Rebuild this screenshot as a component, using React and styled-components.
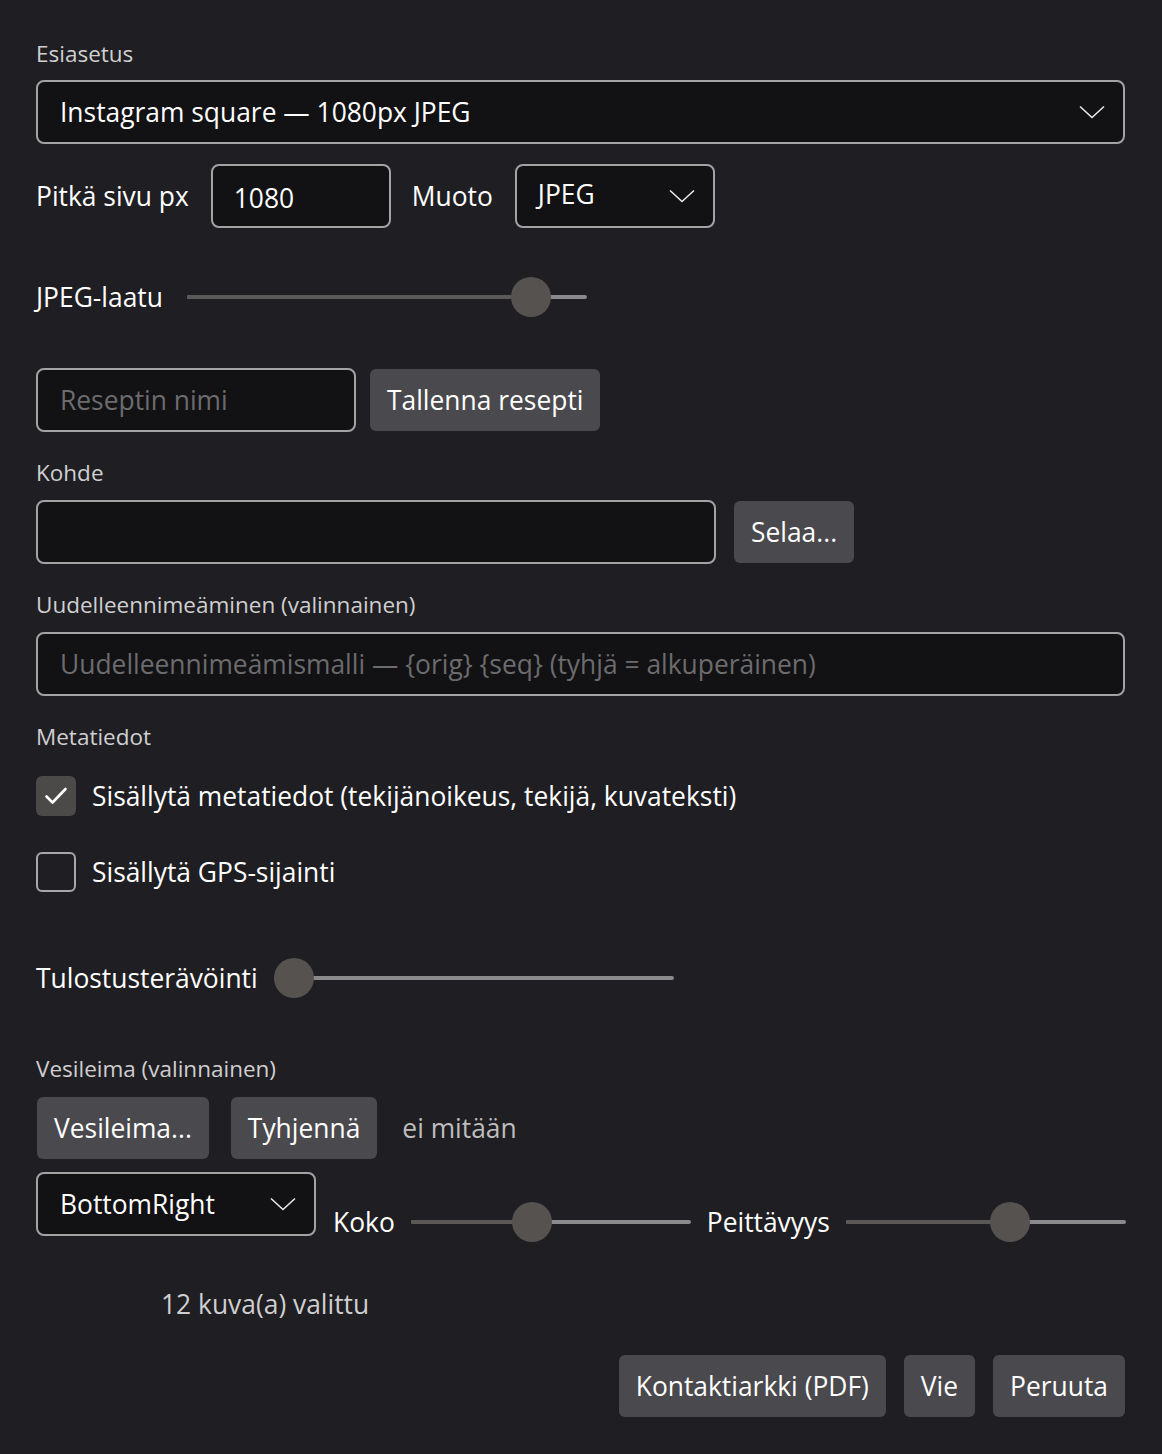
import React from "react";
import styled, { createGlobalStyle } from "styled-components";

const Global = createGlobalStyle`
  html, body { margin: 0; padding: 0; background: #1f1e23; }
  body { font-family: "Open Sans", "Noto Sans", sans-serif; color: #ffffff; }
  * { box-sizing: border-box; }
`;

const Page = styled.div`
  width: 1162px;
  min-height: 1454px;
  background: #1f1e23;
  padding: 38px 37px 0 36px;
  display: flex;
  flex-direction: column;
`;

const Label = styled.div`
  font-size: 22.5px;
  line-height: 32px;
  color: #cfcfcf;
  margin-top: ${(p) => p.$mt || 0}px;
  margin-bottom: ${(p) => p.$mb ?? 11}px;
`;

const Row = styled.div`
  display: flex;
  align-items: ${(p) => p.$align || "center"};
  gap: ${(p) => p.$gap ?? 14}px;
  margin-top: ${(p) => p.$mt || 0}px;
  padding-left: ${(p) => p.$pl || 0}px;
  justify-content: ${(p) => p.$justify || "flex-start"};
`;

const Text = styled.span`
  font-size: 26.4px;
  line-height: 40px;
  color: ${(p) => p.$color || "#ffffff"};
  white-space: nowrap;
  margin-left: ${(p) => p.$ml || 0}px;
  margin-right: ${(p) => p.$mr || 0}px;
`;

const Field = styled.div`
  height: 64px;
  width: ${(p) => (p.$w ? `${p.$w}px` : "100%")};
  flex: none;
  background: #121114;
  border: 2px solid #a3a3a3;
  border-radius: 8px;
  display: flex;
  align-items: center;
  justify-content: space-between;
  padding: 0 18px 0 ${(p) => p.$pl || 22}px;
  font-size: 26.4px;
  color: ${(p) => (p.$placeholder ? "#6c6b6e" : "#ffffff")};
  white-space: nowrap;
  overflow: hidden;
`;

const FieldText = styled.span`
  position: relative;
  top: ${(p) => p.$dy || 0}px;
`;

const Button = styled.div`
  height: 62px;
  padding: 0 17px;
  background: #4a494d;
  border-radius: 6px;
  display: flex;
  align-items: center;
  font-size: 26.4px;
  color: #ffffff;
  white-space: nowrap;
  flex: none;
`;

const Chevron = () => (
  <svg width="26" height="14" viewBox="0 0 26 14" fill="none">
    <path d="M1 1.5 L13 12.5 L25 1.5" stroke="#e8e8e8" strokeWidth="1.6" />
  </svg>
);

const SliderWrap = styled.div`
  position: relative;
  width: ${(p) => p.$w}px;
  height: 40px;
  flex: none;
`;

const Track = styled.div`
  position: absolute;
  left: 0;
  right: 0;
  top: 18px;
  height: 4px;
  border-radius: 2px;
  background: #8a898c;
`;

const Fill = styled.div`
  position: absolute;
  left: 0;
  top: 18px;
  height: 4px;
  border-radius: 2px;
  background: #5b5957;
`;

const Thumb = styled.div`
  position: absolute;
  top: 0;
  width: 40px;
  height: 40px;
  border-radius: 50%;
  background: #55524f;
`;

const Slider = ({ w, value }) => {
  const left = (w - 40) * value;
  return (
    <SliderWrap $w={w}>
      <Track />
      <Fill style={{ width: left + 20 }} />
      <Thumb style={{ left }} />
    </SliderWrap>
  );
};

const Box = styled.div`
  width: 40px;
  height: 40px;
  border-radius: 6px;
  flex: none;
  display: flex;
  align-items: center;
  justify-content: center;
  background: ${(p) => (p.$checked ? "#4c4a48" : "transparent")};
  border: ${(p) => (p.$checked ? "none" : "2px solid #a8a8a8")};
`;

const Check = ({ checked, children, mt }) => (
  <Row $gap={16} $mt={mt}>
    <Box $checked={checked}>
      {checked && (
        <svg width="24" height="20" viewBox="0 0 24 20" fill="none">
          <path d="M2.5 10.5 L8.5 16.5 L21.5 3" stroke="#ffffff" strokeWidth="2.6" strokeLinecap="round" strokeLinejoin="round" />
        </svg>
      )}
    </Box>
    <Text>{children}</Text>
  </Row>
);

const SliderGroup = styled.div`
  display: flex;
  align-items: center;
  margin-top: 30px;
  gap: 16px;
`;

export default function App() {
  return (
    <>
      <Global />
      <Page>
        <Label $mb={10}>Esiasetus</Label>
        <Field>
          <FieldText>Instagram square — 1080px JPEG</FieldText>
          <Chevron />
        </Field>

        <Row $mt={20} $gap={0}>
          <Text $mr={22}>Pitkä sivu px</Text>
          <Field $w={180} $pl={21}>
            <FieldText $dy={2}>1080</FieldText>
          </Field>
          <Text $ml={21} $mr={22}>Muoto</Text>
          <Field $w={200} $pl={21}>
            <FieldText $dy={-2}>JPEG</FieldText>
            <Chevron />
          </Field>
        </Row>

        <Row $mt={49} $gap={24}>
          <Text>JPEG-laatu</Text>
          <Slider w={400} value={0.9} />
        </Row>

        <Row $mt={51}>
          <Field $w={320} $placeholder>Reseptin nimi</Field>
          <Button>Tallenna resepti</Button>
        </Row>

        <Label $mt={25}>Kohde</Label>
        <Row $gap={18}>
          <Field $w={680} />
          <Button>Selaa...</Button>
        </Row>

        <Label $mt={25}>Uudelleennimeäminen (valinnainen)</Label>
        <Field $placeholder>Uudelleennimeämismalli — {"{orig}"} {"{seq}"} (tyhjä = alkuperäinen)</Field>

        <Label $mt={25} $mb={23}>Metatiedot</Label>
        <Check checked>Sisällytä metatiedot (tekijänoikeus, tekijä, kuvateksti)</Check>
        <Check mt={36}>Sisällytä GPS-sijainti</Check>

        <Row $mt={66} $gap={16}>
          <Text>Tulostusterävöinti</Text>
          <Slider w={400} value={0} />
        </Row>

        <Label $mt={55} $mb={12}>Vesileima (valinnainen)</Label>
        <Row $gap={22} $pl={1}>
          <Button>Vesileima...</Button>
          <Button>Tyhjennä</Button>
          <Text $color="#bdbdbd" $ml={3}>ei mitään</Text>
        </Row>

        <Row $mt={13} $align="flex-start" $gap={17}>
          <Field $w={280} $pl={22}>
            <FieldText>BottomRight</FieldText>
            <Chevron />
          </Field>
          <SliderGroup>
            <Text>Koko</Text>
            <Slider w={280} value={0.42} />
            <Text>Peittävyys</Text>
            <Slider w={280} value={0.6} />
          </SliderGroup>
        </Row>

        <Row $mt={42} $pl={125}>
          <Text $color="#cfcfcf">12 kuva(a) valittu</Text>
        </Row>

        <Row $mt={31} $gap={18} $justify="flex-end">
          <Button>Kontaktiarkki (PDF)</Button>
          <Button>Vie</Button>
          <Button>Peruuta</Button>
        </Row>
      </Page>
    </>
  );
}
